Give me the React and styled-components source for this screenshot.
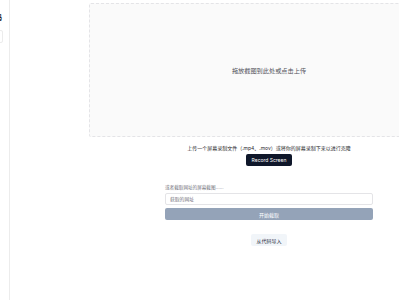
import React, {useState} from 'react';
import styled, {createGlobalStyle} from 'styled-components';

const GlobalStyle = createGlobalStyle`
    html, body {
        margin: 0;
        padding: 0;
        background: #fff;
        overflow: hidden;
    }
    body {
        font-family: Inter, "Noto Sans CJK SC", sans-serif;
        color: #0f172a;
    }
`;

const Layout = styled.div`
    display: flex;
    height: 300px;
`;

// Sidebar, mostly cut off at the left edge
const Sidebar = styled.aside`
    width: 9px;
    flex-shrink: 0;
    border-right: 1px solid #ececec;
    overflow: hidden;
    display: flex;
    flex-direction: column;
    align-items: flex-end;
    padding-top: 12px;
    gap: 8px;
`;

const SideTitle = styled.div`
    font-size: 7px;
    font-weight: 700;
    white-space: nowrap;
    margin-right: 7px;
`;

const SideBox = styled.div`
    width: 40px;
    height: 11px;
    margin-right: 6px;
    border: 1px solid #ececec;
    border-radius: 2px;
    flex-shrink: 0;
`;

// Main content, wider than the window
const Main = styled.main`
    flex-shrink: 0;
    width: 518px;
    padding-top: 3px;
`;

const Column = styled.div`
    width: 360px;
    margin: 0 auto;
    display: flex;
    flex-direction: column;
    align-items: center;
`;

const DropZone = styled.div`
    align-self: stretch;
    height: 134px;
    box-sizing: border-box;
    background: #fafafa;
    border: 1px dashed #e4e4e7;
    border-radius: 2px;
    display: flex;
    align-items: center;
    justify-content: center;
    font-size: 6.2px;
    color: #52525b;
    cursor: pointer;
`;

const Caption = styled.p`
    margin: 7px 0 0;
    font-size: 5px;
    color: #27272a;
    white-space: nowrap;
`;

const DarkButton = styled.button`
    margin-top: 3px;
    height: 12px;
    padding: 0 6px;
    border: 0;
    border-radius: 2px;
    background: #0f172a;
    color: #fff;
    font-family: inherit;
    font-size: 5px;
    cursor: pointer;
`;

const Form = styled.div`
    width: 208px;
    margin-top: 18px;
    display: flex;
    flex-direction: column;
`;

const Label = styled.div`
    font-size: 4.6px;
    color: #71717a;
    margin-bottom: 3px;
`;

const Input = styled.input`
    height: 12px;
    box-sizing: border-box;
    border: 1px solid #e4e4e7;
    border-radius: 2px;
    padding: 0 4px;
    font-family: inherit;
    font-size: 4.8px;
    outline: none;

    &::placeholder {
        color: #71717a;
    }
`;

const WideButton = styled.button`
    margin-top: 3px;
    height: 12px;
    border: 0;
    border-radius: 2px;
    background: #94a3b8;
    color: #fff;
    font-family: inherit;
    font-size: 5px;
`;

const LightButton = styled.button`
    margin-top: 14px;
    height: 12px;
    padding: 0 5px;
    border: 0;
    border-radius: 2px;
    background: #f1f5f9;
    color: #1e293b;
    font-family: inherit;
    font-size: 5px;
`;

export default function App() {
    const [url, setUrl] = useState('');

    return (
        <>
            <GlobalStyle/>
            <Layout>
                <Sidebar>
                    <SideTitle>截图转代码</SideTitle>
                    <SideBox/>
                </Sidebar>
                <Main>
                    <Column>
                        <DropZone>拖放截图到此处或点击上传</DropZone>
                        <Caption>上传一个屏幕录制文件（.mp4、.mov）或将你的屏幕录制下来以进行克隆</Caption>
                        <DarkButton>Record Screen</DarkButton>
                        <Form>
                            <Label>或者截取网址的屏幕截图......</Label>
                            <Input
                                placeholder="获取的网址"
                                value={url}
                                onChange={e => setUrl(e.target.value)}
                            />
                            <WideButton disabled={!url}>开始截取</WideButton>
                        </Form>
                        <LightButton>从代码导入</LightButton>
                    </Column>
                </Main>
            </Layout>
        </>
    );
}
